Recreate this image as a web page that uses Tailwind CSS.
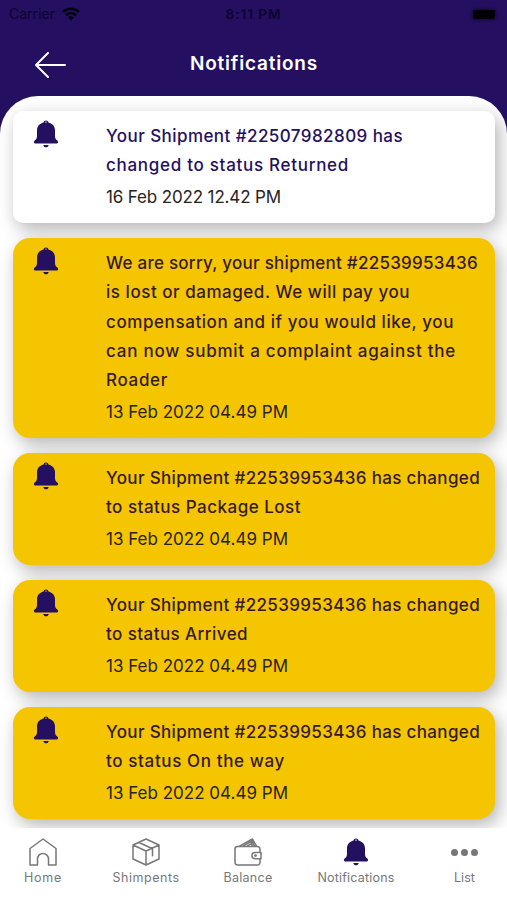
<!DOCTYPE html>
<html lang="en">
<head>
<meta charset="utf-8">
<meta name="viewport" content="width=device-width, initial-scale=1">
<title>Notifications</title>
<script src="https://cdn.jsdelivr.net/npm/@tailwindcss/browser@4"></script>
</head>
<body class="bg-[#240f60] font-['Inter','Liberation_Sans',sans-serif]">
<svg class="hidden">
  <symbol id="bell" viewBox="0 0 26 28">
    <path fill="currentColor" fill-rule="evenodd" d="M13 .5a2.500 2.500 0 0 1 2.500 2.100C19.600 3.700 22 6.500 22 10.500V16c0 2 .6 3.200 2 4.200 1.700.9 1.400 3.400-.8 3.400H2.800c-2.200 0-2.500-2.500-.8-3.400C3.400 19.200 4 18 4 16v-5.500c0-4 2.400-6.800 6.500-7.900A2.500 2.500 0 0 1 13 .5Zm0 1.100a1 1 0 0 0-1 .8h2a1 1 0 0 0-1-.8ZM10.300 24.900h5.400c-.3 1.600-1.400 2.300-2.700 2.300s-2.400-.7-2.700-2.300Z"/>
  </symbol>
</svg>
<div class="flex h-[900px] w-[507px] flex-col overflow-hidden">
  <header class="h-24 shrink-0 text-white">
    <div class="grid h-7 grid-cols-3 items-center pr-[9px] pl-[9px] text-[#0b0430]">
      <div class="flex items-center gap-[7px] text-sm"><span data-width="46" class="whitespace-nowrap">Carrier</span>
        <svg class="h-[14px] w-[18px]" viewBox="0 0 18 14" fill="none" stroke="#050210" stroke-width="2.600"><path d="M1 5c4.500-4.300 11.500-4.300 16 0M4 8.300c2.900-2.700 7.100-2.700 10 0"/><path d="M9 13.500 6 10.400c1.700-1.600 4.300-1.600 6 0Z" fill="#050210" stroke="none"/></svg>
      </div>
      <div class="text-center text-[13.5px] font-semibold"><span data-width="56" class="whitespace-nowrap">8:11 PM</span></div>
      <div class="mr-[3px] h-[9px] w-[22px] justify-self-end rounded-[2px] bg-black shadow-[0_0_3px_1px_rgba(0,0,0,0.45)]"></div>
    </div>
    <div class="flex h-[72px] items-center pt-px pl-[35px]">
      <svg class="h-[26px] w-[31px]" viewBox="0 0 31 26" fill="none" stroke="white" stroke-width="2" stroke-linecap="round" stroke-linejoin="round"><path d="M30 13H1M13 1 1 13l12 12"/></svg>
      <h1 class="ml-[124px] text-[19px] font-semibold"><span data-width="128" class="whitespace-nowrap">Notifications</span></h1>
    </div>
  </header>
  <main class="flex min-h-0 flex-1 flex-col gap-[15px] overflow-hidden rounded-t-[38px] bg-white pr-[12px] pl-[13px] pt-[15px] text-[17px] leading-[29.33px] text-[#351a26]" id="list"></main>
  <nav class="grid h-[72px] shrink-0 grid-cols-[86px_120px_84px_132px_85px] bg-white pt-2.5 text-[12.5px] leading-4 text-[#777]">
    <div class="flex flex-col items-center gap-1">
      <svg class="h-7 w-7" viewBox="0 0 28 28" fill="none" stroke="currentColor" stroke-width="1.500" stroke-linejoin="round"><path d="M1 10.500 14 1l13 9.500V27h-7.500v-6a5.500 5.500 0 0 0-11 0v6H1Z"/></svg>
      <span data-width="38" class="whitespace-nowrap">Home</span>
    </div>
    <div class="flex flex-col items-center gap-1">
      <svg class="h-7 w-7" viewBox="0 0 28 28" fill="none" stroke="currentColor" stroke-width="1.500" stroke-linejoin="round" stroke-linecap="round"><path d="M14 1 27 7v14l-13 6-13-6V7ZM1 7l13 6 13-6M14 13v14M7 4.500l13.500 6.200v7"/></svg>
      <span data-width="67" class="whitespace-nowrap">Shimpents</span>
    </div>
    <div class="flex flex-col items-center gap-1">
      <svg class="h-7 w-7" viewBox="0 0 28 28" fill="none" stroke="currentColor" stroke-width="1.500" stroke-linejoin="round"><path d="M26 14.500V11a2.500 2.500 0 0 0-2.500-2.500h-20A2.500 2.500 0 0 0 1 11v13.500A2.500 2.500 0 0 0 3.500 27h20a2.500 2.500 0 0 0 2.500-2.500v-3.700"/><path d="M27 14.500h-6a3.100 3.100 0 0 0 0 6.200h6Z"/><circle cx="21.500" cy="17.600" r=".7"/><path d="M5.500 8.200 18.500 1l4 7.200M9 8.200l9-5 2.500 5M13 8.200l4.500-2.500 1 2.500"/></svg>
      <span data-width="49" class="whitespace-nowrap">Balance</span>
    </div>
    <div class="flex flex-col items-center gap-1">
      <svg class="h-7 w-[26px] text-[#240f60]"><use href="#bell"/></svg>
      <span data-width="77" class="whitespace-nowrap">Notifications</span>
    </div>
    <div class="flex flex-col items-center gap-1">
      <div class="flex h-7 items-center gap-[3px]"><i class="size-[7px] rounded-full bg-[#777]"></i><i class="size-[7px] rounded-full bg-[#777]"></i><i class="size-[7px] rounded-full bg-[#777]"></i></div>
      <span data-width="21" class="whitespace-nowrap">List</span>
    </div>
  </nav>
</div>
<script>
const items = [
  { read: true, lines: [["Your Shipment #22507982809 has", 297], ["changed to status Returned", 243]], date: ["16 Feb 2022 12.42 PM", 175] },
  { lines: [["We are sorry, your shipment #22539953436", 372], ["is lost or damaged. We will pay you", 304], ["compensation and if you would like, you", 348], ["can now submit a complaint against the", 350], ["Roader", 62]], date: ["13 Feb 2022 04.49 PM", 182] },
  { lines: [["Your Shipment #22539953436 has changed", 374], ["to status Package Lost", 195]], date: ["13 Feb 2022 04.49 PM", 182] },
  { lines: [["Your Shipment #22539953436 has changed", 374], ["to status Arrived", 142]], date: ["13 Feb 2022 04.49 PM", 182] },
  { lines: [["Your Shipment #22539953436 has changed", 374], ["to status On the way", 179]], date: ["13 Feb 2022 04.49 PM", 182] }
];
const line = ([t, w]) => `<div class="whitespace-nowrap"><span data-width="${w}">${t}</span></div>`;
document.getElementById("list").innerHTML = items.map(n => `
  <article class="${n.read ? "rounded-[10px] bg-white text-[#240f60]" : "rounded-[17px] bg-[#f4c500]"} flex shrink-0 pt-[11px] pb-[11px] shadow-[4px_6px_18px_rgba(0,0,0,0.3)]">
    <svg class="ml-5 -mt-[2px] h-7 w-[26px] shrink-0 text-[#240f60]"><use href="#bell"/></svg>
    <div class="ml-[47px]">
      <div class="font-medium">${n.lines.map(line).join("")}</div>
      <div class="mt-[2px] text-[#27221c]">${line(n.date)}</div>
    </div>
  </article>`).join("");
// Tracks each label out to its set width.
function track() {
  document.querySelectorAll("[data-width]").forEach(el => {
    el.style.letterSpacing = "0px";
    const gap = (el.dataset.width - el.getBoundingClientRect().width) / el.textContent.length;
    el.style.letterSpacing = gap + "px";
  });
}
track();
addEventListener("load", () => { track(); requestAnimationFrame(track); document.fonts.ready.then(track); });
</script>
</body>
</html>
